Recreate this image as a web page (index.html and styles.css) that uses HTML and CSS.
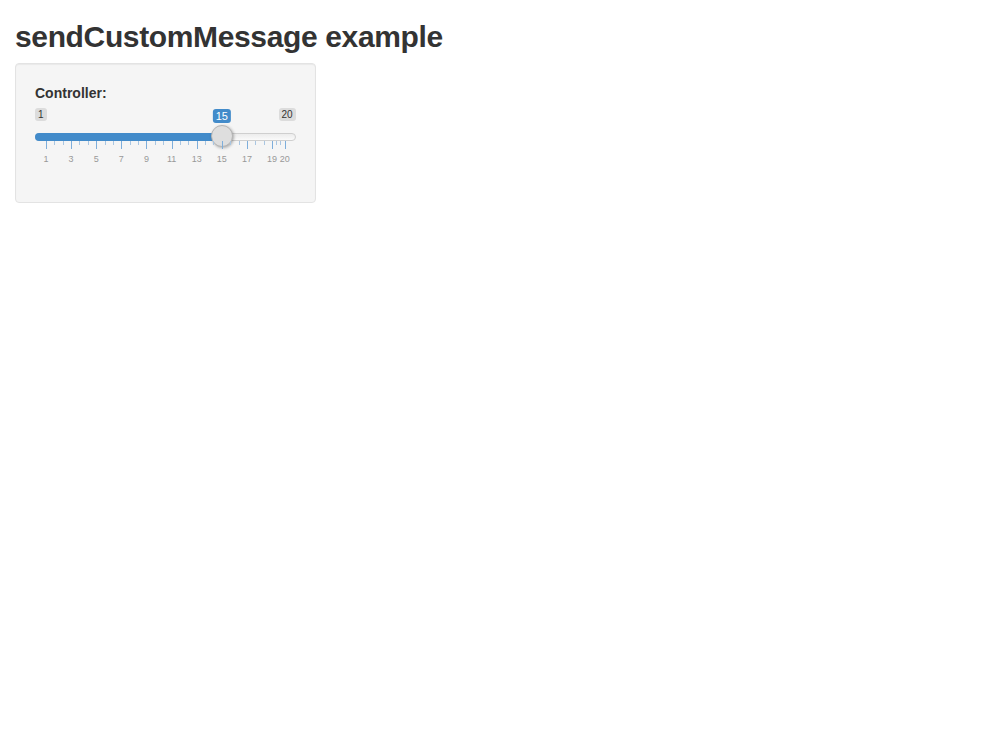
FILE: index.html
```html
<!DOCTYPE html>
<html>
<head>
<meta charset="utf-8">
<title>sendCustomMessage example</title>
<link rel="stylesheet" href="styles.css">
</head>
<body>
<div class="container">
  <h2 class="title">sendCustomMessage example</h2>
  <div class="row">
    <div class="sidebar">
      <div class="well">
        <div class="form-group">
          <label class="control-label">Controller:</label>
          <div class="irs">
            <div class="irs-labels">
              <span class="irs-min">1</span>
              <span class="irs-max">20</span>
            </div>
            <div class="irs-track">
              <div class="irs-line"></div>
              <div class="irs-bar" style="width: 71.6%"></div>
              <div class="irs-area">
                <div class="irs-single" style="left: 73.68%">15</div>
                <div class="irs-slider" style="left: 73.68%"></div>
              </div>
            </div>
            <div class="irs-grid">
              <span class="pol" style="left:0%"></span>
              <span class="pol small" style="left:3.509%"></span>
              <span class="pol small" style="left:7.018%"></span>
              <span class="pol" style="left:10.526%"></span>
              <span class="pol small" style="left:14.035%"></span>
              <span class="pol small" style="left:17.544%"></span>
              <span class="pol" style="left:21.053%"></span>
              <span class="pol small" style="left:24.561%"></span>
              <span class="pol small" style="left:28.070%"></span>
              <span class="pol" style="left:31.579%"></span>
              <span class="pol small" style="left:35.088%"></span>
              <span class="pol small" style="left:38.596%"></span>
              <span class="pol" style="left:42.105%"></span>
              <span class="pol small" style="left:45.614%"></span>
              <span class="pol small" style="left:49.123%"></span>
              <span class="pol" style="left:52.632%"></span>
              <span class="pol small" style="left:56.140%"></span>
              <span class="pol small" style="left:59.649%"></span>
              <span class="pol" style="left:63.158%"></span>
              <span class="pol small" style="left:66.667%"></span>
              <span class="pol small" style="left:70.175%"></span>
              <span class="pol" style="left:73.684%"></span>
              <span class="pol small" style="left:77.193%"></span>
              <span class="pol small" style="left:80.702%"></span>
              <span class="pol" style="left:84.211%"></span>
              <span class="pol small" style="left:87.719%"></span>
              <span class="pol small" style="left:91.228%"></span>
              <span class="pol" style="left:94.737%"></span>
              <span class="pol small" style="left:96.491%"></span>
              <span class="pol small" style="left:98.246%"></span>
              <span class="pol" style="left:100%"></span>
              <span class="txt" style="left:0%">1</span>
              <span class="txt" style="left:10.526%">3</span>
              <span class="txt" style="left:21.053%">5</span>
              <span class="txt" style="left:31.579%">7</span>
              <span class="txt" style="left:42.105%">9</span>
              <span class="txt" style="left:52.632%">11</span>
              <span class="txt" style="left:63.158%">13</span>
              <span class="txt" style="left:73.684%">15</span>
              <span class="txt" style="left:84.211%">17</span>
              <span class="txt" style="left:94.737%">19</span>
              <span class="txt" style="left:100%">20</span>
            </div>
          </div>
        </div>
      </div>
    </div>
  </div>
</div>
</body>
</html>
```
FILE: styles.css
```css
html, body {
  margin: 0;
  padding: 0;
  background: #fff;
}
body {
  font-family: "Liberation Sans", Arial, Helvetica, sans-serif;
  font-size: 14px;
  line-height: 20px;
  color: #333;
}
.container {
  padding: 0 15px;
}
.title {
  margin: 20px 0 10px;
  font-size: 30px;
  line-height: 33px;
  font-weight: bold;
  letter-spacing: -0.36px;
  color: #333;
}
.row {
  display: flex;
  margin: 0 -15px;
}
.sidebar {
  width: 33.3333%;
  padding: 0 15px;
  box-sizing: border-box;
}
.well {
  background: #f5f5f5;
  border: 1px solid #e3e3e3;
  border-radius: 4px;
  box-shadow: inset 0 1px 1px rgba(0,0,0,0.05);
  padding: 19px;
  min-height: 20px;
}
.form-group {
  display: flex;
  flex-direction: column;
}
.control-label {
  font-weight: bold;
  font-size: 14px;
  line-height: 20px;
  margin-bottom: 5px;
}
.irs {
  position: relative;
  height: 75px;
  font-family: "Liberation Sans", Arial, Helvetica, sans-serif;
}
.irs-labels {
  display: flex;
  justify-content: space-between;
  height: 25px;
}
.irs-min, .irs-max {
  align-self: flex-start;
  font-size: 10px;
  line-height: 13px;
  padding: 0 3px;
  background: rgba(0,0,0,0.1);
  border-radius: 3px;
  color: #333;
}
.irs-track {
  position: relative;
  height: 8px;
}
.irs-line {
  position: absolute;
  inset: 0;
  box-sizing: border-box;
  border: 1px solid #cfcfcf;
  background: linear-gradient(#ececec, #fafafa);
  border-radius: 16px;
}
.irs-bar {
  position: absolute;
  left: 0;
  top: 0;
  height: 8px;
  background: #428bca;
  border-radius: 16px 0 0 16px;
}
.irs-area {
  position: absolute;
  left: 11px;
  right: 11px;
  top: 0;
  bottom: 0;
}
.irs-slider {
  position: absolute;
  top: -8px;
  width: 22px;
  height: 22px;
  margin-left: -11px;
  box-sizing: border-box;
  background: #dedede;
  border: 1px solid #b5b5b5;
  border-radius: 50%;
  box-shadow: 1px 1px 3px rgba(0,0,0,0.3);
}
.irs-single {
  position: absolute;
  top: -24px;
  transform: translateX(-50%);
  font-size: 11px;
  line-height: 14px;
  padding: 0 3px;
  background: #428bca;
  color: #fff;
  border-radius: 3px;
}
.irs-grid {
  position: relative;
  margin: 0 11px;
  height: 27px;
}
.pol {
  position: absolute;
  top: 0;
  width: 1px;
  height: 8px;
  background: #7eaedb;
}
.pol.small {
  height: 4px;
  background: #a9c6e2;
}
.txt {
  position: absolute;
  top: 14px;
  transform: translateX(-50%);
  font-size: 9px;
  line-height: 9px;
  color: #999;
  white-space: nowrap;
}
```
